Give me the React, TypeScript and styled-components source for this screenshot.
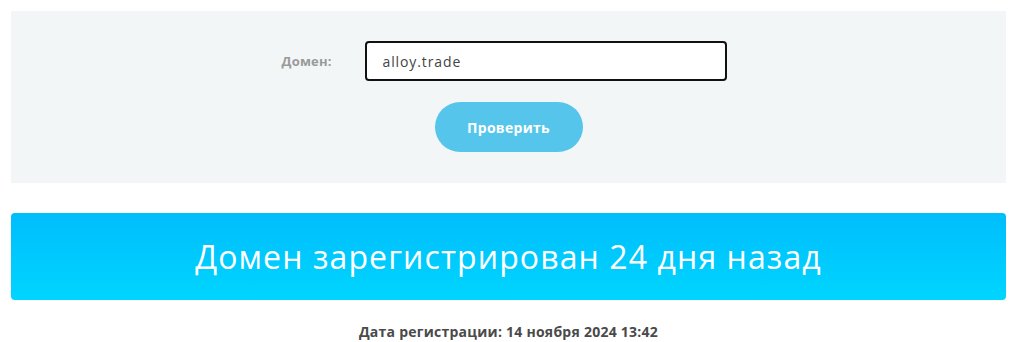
import styled, { createGlobalStyle } from 'styled-components'

const GlobalStyle = createGlobalStyle`
  body {
    margin: 0;
    background: #ffffff;
    font-family: 'Open Sans', 'Liberation Sans', sans-serif;
  }
`

const Page = styled.main`
  padding: 11px 17px 0 11px;
  display: flex;
  flex-direction: column;
`

const CheckPanel = styled.section`
  background: #f2f6f7;
  height: 172px;
  box-sizing: border-box;
  padding-top: 30px;
  display: flex;
  flex-direction: column;
  align-items: center;
  gap: 21px;
`

const FormRow = styled.div`
  display: flex;
  align-items: center;
  margin-right: 9px;
`

const Label = styled.label`
  width: 83px;
  font-size: 13px;
  font-weight: 700;
  color: #9a9a9a;
  letter-spacing: 0.2px;
`

const DomainInput = styled.input`
  width: 362px;
  height: 40px;
  box-sizing: border-box;
  border: 2px solid #111;
  border-radius: 4px;
  padding: 0 16px;
  font-family: inherit;
  font-size: 14px;
  letter-spacing: 0.9px;
  color: #444;
  background: #fff;
  outline: none;
`

const CheckButton = styled.button`
  width: 148px;
  height: 50px;
  border: none;
  border-radius: 25px;
  background: #55c5ec;
  color: #fff;
  font-family: inherit;
  font-size: 14px;
  font-weight: 700;
  letter-spacing: 0.3px;
  cursor: pointer;
`

const ResultBanner = styled.div`
  margin-top: 30px;
  height: 87px;
  border-radius: 4px;
  background: linear-gradient(180deg, #00bdfc 0%, #00d5ff 100%);
  display: flex;
  align-items: center;
  justify-content: center;
  color: #fff;
  font-size: 32px;
  font-weight: 400;
  letter-spacing: 1.1px;
`

const RegDate = styled.p`
  margin: 22px 0 0;
  text-align: center;
  font-size: 14px;
  font-weight: 700;
  color: #4a4a4a;
  letter-spacing: 0.25px;
`

export default function App() {
  return (
    <>
      <GlobalStyle />
      <Page>
        <CheckPanel>
          <FormRow>
            <Label htmlFor="domain">Домен:</Label>
            <DomainInput id="domain" defaultValue="alloy.trade" />
          </FormRow>
          <CheckButton>Проверить</CheckButton>
        </CheckPanel>
        <ResultBanner>Домен зарегистрирован 24 дня назад</ResultBanner>
        <RegDate>Дата регистрации: 14 ноября 2024 13:42</RegDate>
      </Page>
    </>
  )
}
